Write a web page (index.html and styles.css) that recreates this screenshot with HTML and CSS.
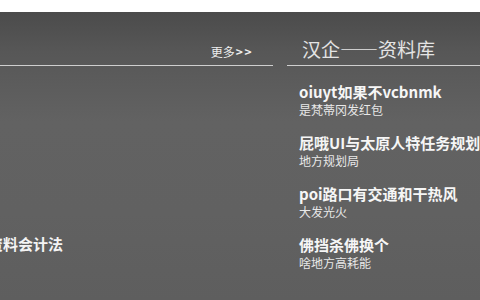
FILE: index.html
```html
<!DOCTYPE html>
<html lang="zh">
<head>
<meta charset="utf-8">
<link rel="stylesheet" href="styles.css">
</head>
<body>
<div class="topband"></div>
<main class="panel">
  <section class="left">
    <div class="left-head">
      <a class="more">更多<span class="arrows">&gt;&gt;</span></a>
    </div>
    <div class="left-body">
      <div class="left-item">资料会计法</div>
    </div>
  </section>
  <section class="right">
    <div class="right-head">
      <h2 class="title">汉企——资料库</h2>
    </div>
    <ul class="list">
      <li class="item">
        <div class="item-title">oiuyt如果不vcbnmk</div>
        <div class="item-sub">是梵蒂冈发红包</div>
      </li>
      <li class="item">
        <div class="item-title">屁哦UI与太原人特任务规划局</div>
        <div class="item-sub">地方规划局</div>
      </li>
      <li class="item">
        <div class="item-title">poi路口有交通和干热风</div>
        <div class="item-sub">大发光火</div>
      </li>
      <li class="item">
        <div class="item-title">佛挡杀佛换个</div>
        <div class="item-sub">啥地方高耗能</div>
      </li>
    </ul>
  </section>
</main>
</body>
</html>
```
FILE: styles.css
```css
html, body {
  margin: 0;
  padding: 0;
  width: 480px;
  height: 300px;
  overflow: hidden;
  background: #ffffff;
  font-family: "Noto Sans CJK SC", "Noto Sans", sans-serif;
}
.topband {
  height: 12px;
  background: #ffffff;
}
.panel {
  height: 288px;
  display: flex;
  gap: 14px;
  background: linear-gradient(180deg, #4b4b4b 0px, #575757 40px, #626262 110px, #616161 200px, #5e5e5e 288px);
  color: #f2f2f2;
  overflow: hidden;
}
.left {
  width: 273px;
  flex: none;
  display: flex;
  flex-direction: column;
}
.left-head {
  height: 54px;
  border-bottom: 1px solid #cfcfcf;
  display: flex;
  justify-content: flex-end;
  align-items: flex-end;
  padding-right: 20px;
  box-sizing: border-box;
}
.more {
  font-size: 12px;
  line-height: 14px;
  padding-bottom: 6px;
  color: #eeeeee;
}
.arrows {
  font-weight: 700;
  letter-spacing: 1.5px;
  margin-left: 1px;
}
.left-body {
  padding-top: 168px;
}
.left-item {
  margin-left: -12px;
  font-size: 15px;
  font-weight: 700;
  line-height: 20px;
  color: #f4f4f4;
}
.right {
  flex: 1;
  min-width: 0;
  display: flex;
  flex-direction: column;
}
.right-head {
  height: 54px;
  border-bottom: 1px solid #cfcfcf;
  display: flex;
  align-items: flex-end;
  box-sizing: border-box;
}
.title {
  margin: 0 0 3px 15px;
  font-size: 19px;
  font-weight: 400;
  line-height: 26px;
  color: #e4e4e4;
  white-space: nowrap;
}
.list {
  list-style: none;
  margin: 0;
  padding: 16px 0 0 12px;
}
.item {
  margin-bottom: 15px;
  white-space: nowrap;
}
.item-title {
  font-size: 15px;
  font-weight: 700;
  line-height: 20px;
  color: #f6f6f6;
}
.item-sub {
  font-size: 12px;
  line-height: 16px;
  color: #e8e8e8;
}
```
